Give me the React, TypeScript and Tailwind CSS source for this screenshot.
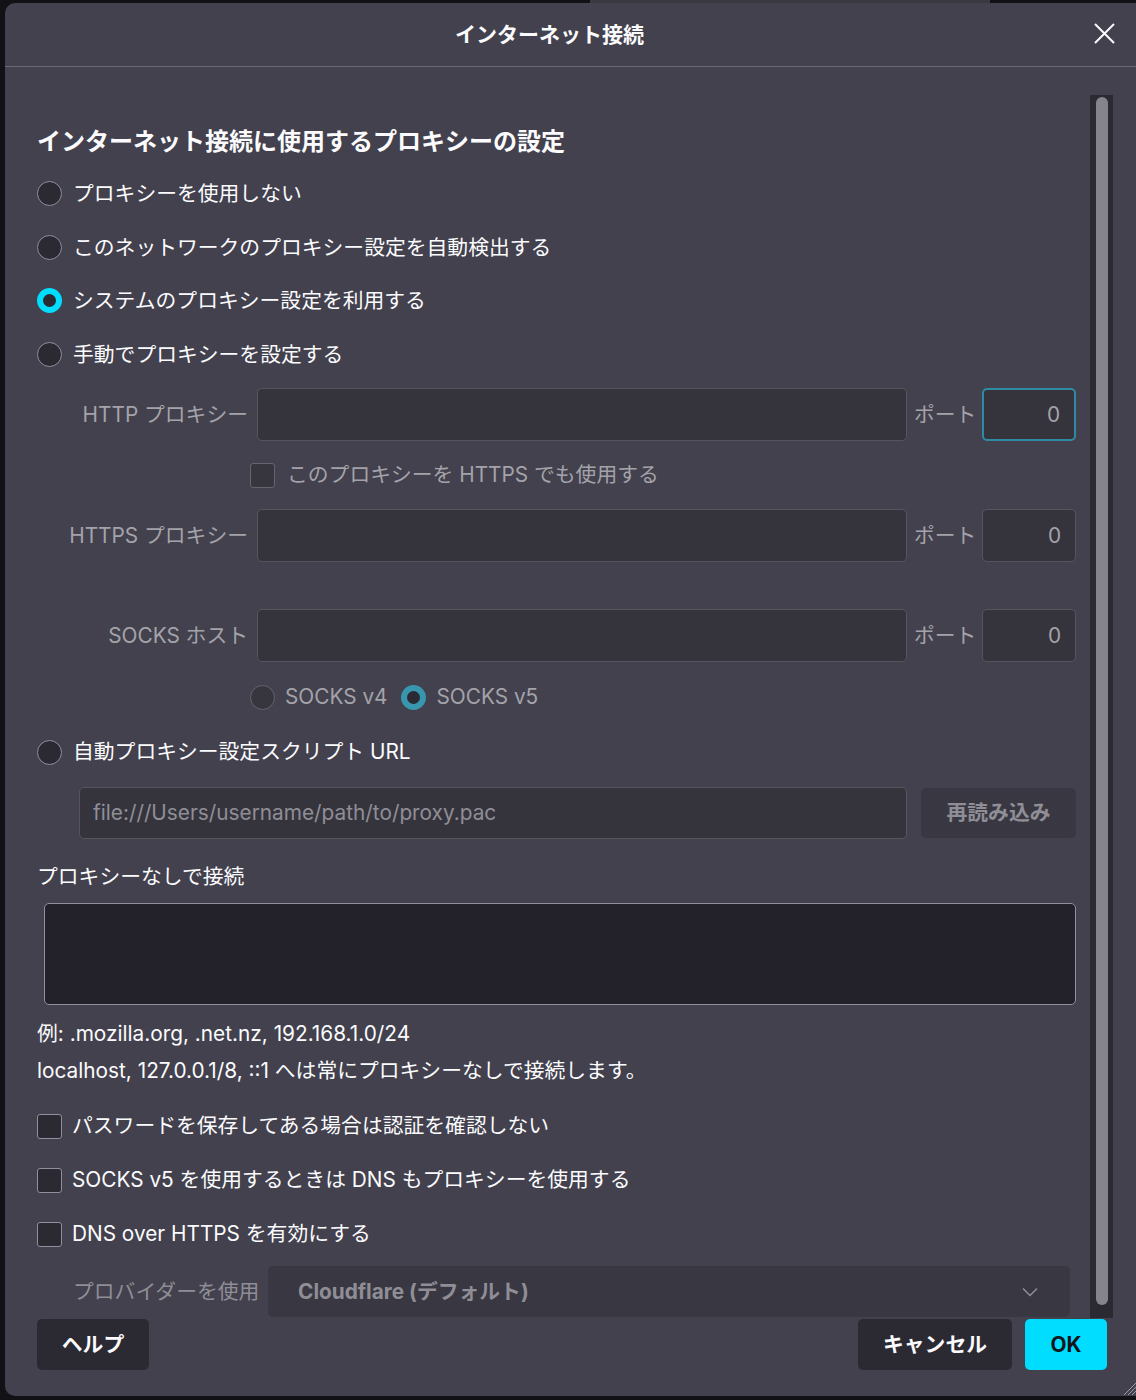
import React from "react";

const FONT = 'Inter, "Noto Sans CJK JP", sans-serif';

function Radio({ checked = false, disabled = false }: { checked?: boolean; disabled?: boolean }) {
  if (checked) {
    return (
      <span
        className={`block w-[25px] h-[25px] shrink-0 rounded-full border-[6px] bg-[#2b2a33] ${
          disabled ? "border-[#3896ae]" : "border-[#00ddff]"
        }`}
      />
    );
  }
  return (
    <span
      className={`block w-[25px] h-[25px] shrink-0 rounded-full border-[1.5px] ${
        disabled ? "border-[#66656e] bg-[#37363f]" : "border-[#8f8f9d] bg-[#2b2a33]"
      }`}
    />
  );
}

function Checkbox({ disabled = false }: { disabled?: boolean }) {
  return (
    <span
      className={`block w-[25px] h-[25px] shrink-0 rounded-[3px] border-[1.5px] ${
        disabled ? "border-[#66656e] bg-[#37363f]" : "border-[#8f8f9d] bg-[#2b2a33]"
      }`}
    />
  );
}

function ProxyRow({ label, focused = false }: { label: string; focused?: boolean }) {
  return (
    <div className="flex items-center h-[53px]">
      <span className="w-[211px] shrink-0 text-right text-[20.8px] text-[#a4a3aa]">{label}</span>
      <div className="ml-[9px] flex-1 h-[53px] rounded-[5px] border border-[#56555e] bg-[#35343d]" />
      <span className="ml-[7px] w-[60px] shrink-0 text-[20.8px] text-[#a4a3aa] whitespace-nowrap">ポート</span>
      <div
        className={`ml-[8px] w-[94px] h-[53px] shrink-0 rounded-[5px] bg-[#35343d] flex items-center justify-end pr-[14px] text-[20.8px] text-[#a4a3aa] ${
          focused ? "border-2 border-[#2f8ba5]" : "border border-[#56555e]"
        }`}
      >
        0
      </div>
    </div>
  );
}

function RadioRow({ label, checked = false }: { label: string; checked?: boolean }) {
  return (
    <div className="flex items-center h-[53.5px]">
      <Radio checked={checked} />
      <span className="ml-[11px] text-[20.8px] text-[#fbfbfe]">{label}</span>
    </div>
  );
}

function CheckRow({ label }: { label: string }) {
  return (
    <div className="flex items-center h-[54px]">
      <Checkbox />
      <span className="ml-[10px] text-[20.8px] text-[#fbfbfe]">{label}</span>
    </div>
  );
}

export default function App() {
  return (
    <div
      className="relative w-[1136px] h-[1400px] overflow-hidden bg-[#121115] pt-[3px] pl-[5px]"
      style={{ fontFamily: FONT }}
    >
      <div className="absolute top-0 left-[590px] w-[400px] h-[3px] bg-[#3a393f]" />

      <div className="w-[1140px] h-[1393px] rounded-[10px] bg-[#42414d] flex flex-col">
        {/* header */}
        <div className="relative h-[64px] shrink-0 flex items-center justify-center pr-[51px] border-b border-[#6c6b75]">
          <span className="text-[21px] font-bold text-[#fbfbfe]">インターネット接続</span>
          <svg
            className="absolute left-[1089px] top-[20px]"
            width="21"
            height="21"
            viewBox="0 0 21 21"
            fill="none"
            stroke="#fbfbfe"
            strokeWidth="2"
          >
            <path d="M1 1 L20 20 M20 1 L1 20" />
          </svg>
        </div>

        {/* body */}
        <div className="flex h-[1251px] shrink-0">
          <div className="w-[1071px] pl-[32px] pt-[59px]">
            <div className="h-[32px] flex items-center text-[24px] font-bold text-[#fbfbfe]">
              インターネット接続に使用するプロキシーの設定
            </div>
            <div className="mt-[9px]">
              <RadioRow label="プロキシーを使用しない" />
              <RadioRow label="このネットワークのプロキシー設定を自動検出する" />
              <RadioRow label="システムのプロキシー設定を利用する" checked />
              <RadioRow label="手動でプロキシーを設定する" />
            </div>

            <div className="mt-[7px]">
              <ProxyRow label="HTTP プロキシー" focused />
              <div className="h-[68px] flex items-center pl-[213px]">
                <Checkbox disabled />
                <span className="ml-[12px] text-[20.8px] text-[#a4a3aa]">このプロキシーを HTTPS でも使用する</span>
              </div>
              <ProxyRow label="HTTPS プロキシー" />
              <div className="mt-[47px]">
                <ProxyRow label="SOCKS ホスト" />
              </div>
              <div className="h-[70px] flex items-center pl-[213px]">
                <Radio disabled />
                <span className="ml-[10px] text-[20.8px] text-[#a4a3aa]">SOCKS v4</span>
                <span className="ml-[13px] block">
                  <Radio checked disabled />
                </span>
                <span className="ml-[11px] text-[20.8px] text-[#a4a3aa]">SOCKS v5</span>
              </div>
            </div>

            <div className="h-[40px] flex items-center">
              <Radio />
              <span className="ml-[11px] text-[20.8px] text-[#fbfbfe]">自動プロキシー設定スクリプト URL</span>
            </div>

            <div className="mt-[15px] flex items-center pl-[42px]">
              <div className="flex-1 h-[52px] rounded-[5px] border border-[#56555e] bg-[#35343d] flex items-center pl-[13px] text-[20.8px] text-[#8f8e96]">
                file:///Users/username/path/to/proxy.pac
              </div>
              <div className="ml-[14px] w-[155px] h-[50px] rounded-[5px] bg-[#393842] flex items-center justify-center text-[20.8px] font-bold text-[#8f8e96]">
                再読み込み
              </div>
            </div>

            <div className="mt-[23px] h-[30px] flex items-center text-[20.8px] text-[#fbfbfe]">
              プロキシーなしで接続
            </div>
            <div className="mt-[11px] ml-[7px] h-[102px] rounded-[5px] border-[1.5px] border-[#8f8f9d] bg-[#23222b]" />

            <div className="mt-[10px] text-[20.8px] leading-[37px] text-[#fbfbfe]">
              <div>例: .mozilla.org, .net.nz, 192.168.1.0/24</div>
              <div>localhost, 127.0.0.1/8, ::1 へは常にプロキシーなしで接続します。</div>
            </div>

            <div className="mt-[10px]">
              <CheckRow label="パスワードを保存してある場合は認証を確認しない" />
              <CheckRow label="SOCKS v5 を使用するときは DNS もプロキシーを使用する" />
              <CheckRow label="DNS over HTTPS を有効にする" />
            </div>

            <div className="mt-[5px] flex items-center pl-[36px] pr-[6px]">
              <span className="w-[195px] shrink-0 text-[20.8px] text-[#8f8e96]">プロバイダーを使用</span>
              <div className="flex-1 h-[51px] rounded-[5px] bg-[#393842] flex items-center justify-between pl-[30px] pr-[32px]">
                <span className="text-[20.8px] font-bold text-[#8f8e96]">Cloudflare (デフォルト)</span>
                <svg width="16" height="10" viewBox="0 0 16 10" fill="none" stroke="#8f8e96" strokeWidth="1.5">
                  <path d="M1 1.5 L8 8.5 L15 1.5" />
                </svg>
              </div>
            </div>
          </div>

          {/* scrollbar */}
          <div className="ml-[14px] mt-[28px] w-[23px] h-[1223px] bg-[#2b2a33] flex justify-center pt-[2px]">
            <div className="w-[12px] h-[1208px] rounded-full bg-[#85848c]" />
          </div>
        </div>

        {/* footer */}
        <div className="flex justify-between pl-[32px] pr-[38px] pt-[1px]">
          <button className="w-[112px] h-[51px] rounded-[5px] bg-[#2b2a33] text-[20.8px] font-bold text-[#fbfbfe]">
            ヘルプ
          </button>
          <div className="flex gap-[13px]">
            <button className="w-[154px] h-[51px] rounded-[5px] bg-[#2b2a33] text-[20.8px] font-bold text-[#fbfbfe]">
              キャンセル
            </button>
            <button className="w-[82px] h-[51px] rounded-[5px] bg-[#00ddff] text-[20.8px] font-bold text-[#15141a]">
              OK
            </button>
          </div>
        </div>
      </div>

      <svg className="absolute right-0 bottom-[5px]" width="14" height="14" viewBox="0 0 14 14" stroke="#9a9aa2" strokeWidth="1">
        <path d="M14 2 L2 14 M14 6 L6 14 M14 10 L10 14" />
      </svg>
    </div>
  );
}
